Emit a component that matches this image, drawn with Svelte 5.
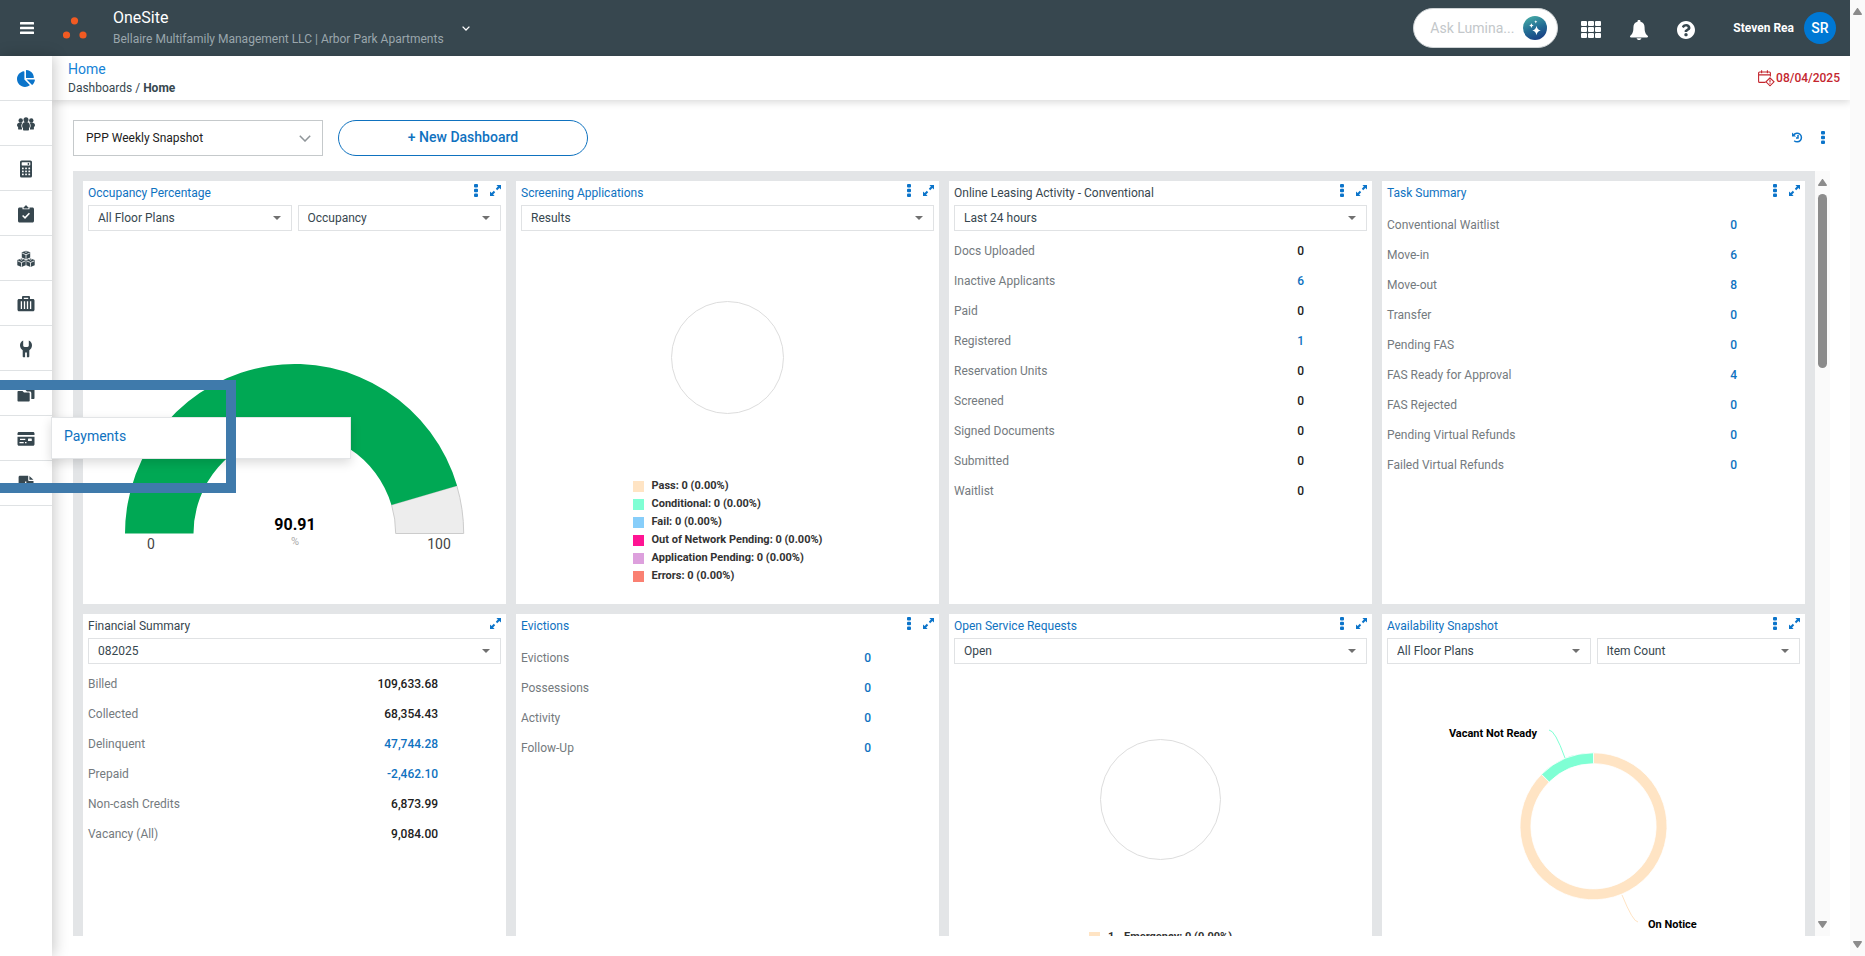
<script>
  const nav = [
    { id: 'dashboards', label: 'Dashboards', active: true },
    { id: 'people', label: 'Residents' },
    { id: 'calculator', label: 'Accounting' },
    { id: 'clipboard', label: 'Tasks' },
    { id: 'cubes', label: 'Units' },
    { id: 'suitcase', label: 'Property' },
    { id: 'wrench', label: 'Facilities' },
    { id: 'folders', label: 'Documents' },
    { id: 'card', label: 'Payments' },
    { id: 'report', label: 'Reports' }
  ];

  const cards = [
    {
      title: 'Occupancy Percentage', link: true, menu: true,
      selects: ['All Floor Plans', 'Occupancy'], chart: 'gauge'
    },
    {
      title: 'Screening Applications', link: true, menu: true,
      selects: ['Results'], chart: 'screening',
      legend: [
        ['#ffe4c4', 'Pass: 0 (0.00%)'],
        ['#7fffd4', 'Conditional: 0 (0.00%)'],
        ['#87cefa', 'Fail: 0 (0.00%)'],
        ['#ff1493', 'Out of Network Pending: 0 (0.00%)'],
        ['#dda0dd', 'Application Pending: 0 (0.00%)'],
        ['#fa8072', 'Errors: 0 (0.00%)']
      ]
    },
    {
      title: 'Online Leasing Activity - Conventional', menu: true,
      selects: ['Last 24 hours'],
      rows: [
        ['Docs Uploaded', '0'], ['Inactive Applicants', '6', true], ['Paid', '0'],
        ['Registered', '1', true], ['Reservation Units', '0'], ['Screened', '0'],
        ['Signed Documents', '0'], ['Submitted', '0'], ['Waitlist', '0']
      ]
    },
    {
      title: 'Task Summary', link: true, menu: true,
      rows: [
        ['Conventional Waitlist', '0', true], ['Move-in', '6', true], ['Move-out', '8', true],
        ['Transfer', '0', true], ['Pending FAS', '0', true], ['FAS Ready for Approval', '4', true],
        ['FAS Rejected', '0', true], ['Pending Virtual Refunds', '0', true],
        ['Failed Virtual Refunds', '0', true]
      ]
    },
    {
      title: 'Financial Summary', selects: ['082025'],
      rows: [
        ['Billed', '109,633.68'], ['Collected', '68,354.43'], ['Delinquent', '47,744.28', true],
        ['Prepaid', '-2,462.10', true], ['Non-cash Credits', '6,873.99'], ['Vacancy (All)', '9,084.00']
      ]
    },
    {
      title: 'Evictions', link: true, menu: true,
      rows: [
        ['Evictions', '0', true], ['Possessions', '0', true],
        ['Activity', '0', true], ['Follow-Up', '0', true]
      ]
    },
    {
      title: 'Open Service Requests', link: true, menu: true,
      selects: ['Open'], chart: 'service',
      legend: [['#ffe4c4', '1 - Emergency: 0 (0.00%)']]
    },
    {
      title: 'Availability Snapshot', link: true, menu: true,
      selects: ['All Floor Plans', 'Item Count'], chart: 'donut'
    }
  ];

  // Point on a circle; the angle is in degrees, clockwise from 12 o'clock.
  const point = (cx, cy, r, deg) => {
    const a = (deg * Math.PI) / 180;
    return `${(cx + r * Math.sin(a)).toFixed(2)} ${(cy - r * Math.cos(a)).toFixed(2)}`;
  };
  const ring = (cx, cy, outer, inner, from, to) => {
    const big = to - from > 180 ? 1 : 0;
    return `M${point(cx, cy, outer, from)}A${outer} ${outer} 0 ${big} 1 ${point(cx, cy, outer, to)}L${point(cx, cy, inner, to)}A${inner} ${inner} 0 ${big} 0 ${point(cx, cy, inner, from)}Z`;
  };
  const gaugeStop = -90 + 1.8 * 90.91;
</script>

{#snippet kebab()}
  <svg width="4" height="13" viewBox="0 0 4 13" fill="currentColor" aria-hidden="true">
    <rect width="4" height="3.4" rx="1" /><rect y="4.8" width="4" height="3.4" rx="1" /><rect y="9.6" width="4" height="3.4" rx="1" />
  </svg>
{/snippet}

{#snippet arrow(down)}
  <svg width="9" height="7" viewBox="0 0 9 7" fill="#8b8b8b" aria-hidden="true">
    {#if down}<path d="M.8 0h7.4c.7 0 1 .8.6 1.3L5.200 6.500c-.4.6-1 .6-1.400 0L.2 1.300C-.2.8.1 0 .8 0z" />
    {:else}<path d="M.8 7h7.400c.7 0 1-.8.6-1.300L5.200.5c-.4-.6-1-.6-1.400 0L.2 5.700C-.2 6.200.1 7 .8 7z" />{/if}
  </svg>
{/snippet}

<div class="window">
  <div class="app">
    <header class="topbar">
      <button class="plain" aria-label="Toggle menu">
        <svg width="14" height="12" viewBox="0 0 14 12" fill="#fff"><rect width="14" height="2.600" rx=".6" /><rect y="4.700" width="14" height="2.600" rx=".6" /><rect y="9.400" width="14" height="2.600" rx=".6" /></svg>
      </button>
      <svg class="logo" width="24" height="22" viewBox="0 0 24 22" fill="#f15a22" aria-hidden="true">
        <circle cx="11.500" cy="3.800" r="3.600" /><circle cx="3.500" cy="18" r="3.600" /><circle cx="20" cy="18" r="3.600" />
      </svg>
      <div class="product">
        <div class="name">OneSite</div>
        <div class="site">Bellaire Multifamily Management LLC | Arbor Park Apartments</div>
      </div>
      <button class="plain" aria-label="Switch property">
        <svg width="8" height="5" viewBox="0 0 8 5" fill="none" stroke="#fff" stroke-width="1.300"><path d="M.6.6 4 4 7.400.6" /></svg>
      </button>
      <div class="tools">
        <div class="ask">
          <input type="text" placeholder="Ask Lumina..." aria-label="Ask Lumina" />
          <svg width="24" height="24" viewBox="0 0 24 24" aria-hidden="true">
            <defs><linearGradient id="lumina" x1=".3" y1="0" x2=".7" y2="1"><stop offset="0" stop-color="#45a9a5" /><stop offset=".5" stop-color="#236e95" /><stop offset="1" stop-color="#193d84" /></linearGradient></defs>
            <circle cx="12" cy="12" r="12" fill="url(#lumina)" />
            <path fill="#fff" d="M13.500 9.800q.6 4 4.300 4.700q-3.700.7-4.300 4.700q-.6-4-4.300-4.700q3.700-.7 4.300-4.700zM8.400 7.200q.3 2 2.200 2.400q-1.900.4-2.200 2.400q-.3-2-2.200-2.400q1.900-.4 2.200-2.400zM12.800 4.200q.2 1.400 1.500 1.600q-1.300.2-1.500 1.600q-.2-1.400-1.500-1.600q1.300-.2 1.500-1.600z" />
          </svg>
        </div>
        <button class="plain" aria-label="Applications">
          <svg width="20" height="17" viewBox="0 0 20 17" fill="#fff">
            {#each [0, 7, 14] as x}{#each [0, 6, 12] as y}<rect {x} {y} width="6" height="5" rx="1" />{/each}{/each}
          </svg>
        </button>
        <button class="plain" aria-label="Notifications">
          <svg width="18" height="20" viewBox="0 0 18 20" fill="#fff"><path d="M9 0c.9 0 1.500.5 1.500 1.400v.4c2.900.7 4.100 3 4.100 5.700 0 5 1.200 6.600 3 8.200.8.8.4 1.900-.7 1.900H1.100c-1.100 0-1.500-1.100-.7-1.900 1.800-1.600 3-3.200 3-8.200 0-2.700 1.200-5 4.100-5.700v-.4C7.500.5 8.100 0 9 0z" /><path d="M6.600 18.200h4.800C11.200 19.400 10.200 20 9 20s-2.200-.6-2.400-1.800z" /></svg>
        </button>
        <button class="plain" aria-label="Help">
          <svg width="18" height="18" viewBox="8 8 496 496" fill="#fff"><path d="M504 256c0 136.997-111.043 248-248 248S8 392.997 8 256C8 119.083 119.043 8 256 8s248 111.083 248 248zM262.655 90c-54.497 0-89.255 22.957-116.549 63.758-3.536 5.286-2.353 12.415 2.715 16.258l34.699 26.310c5.205 3.947 12.621 3.008 16.665-2.122 17.864-22.658 30.113-35.797 57.303-35.797 20.429 0 45.698 13.148 45.698 32.958 0 14.976-12.363 22.667-32.534 33.976C247.128 238.528 216 254.941 216 296v4c0 6.627 5.373 12 12 12h56c6.627 0 12-5.373 12-12v-1.333c0-28.462 83.186-29.647 83.186-106.667 0-58.002-60.165-102-116.531-102zM256 338c-25.365 0-46 20.635-46 46 0 25.364 20.635 46 46 46s46-20.636 46-46c0-25.365-20.635-46-46-46z" /></svg>
        </button>
        <div class="user"><span>Steven Rea</span><span class="avatar">SR</span></div>
      </div>
    </header>

    <div class="body">
      <nav class="sidebar" aria-label="Main">
        {#each nav as item}
          <a href="#{item.id}" class="item" class:active={item.active} aria-label={item.label}>
            <svg width="18" height="18" viewBox="0 0 18 18" fill="currentColor" aria-hidden="true">
              {#if item.id === 'dashboards'}
                <path transform="scale(.033)" d="M527.790 288H290.500l158.030 158.030c6.040 6.040 15.980 6.530 22.190.68 38.700-36.460 65.320-85.610 73.130-140.860 1.340-9.460-6.510-17.850-16.060-17.850zm-15.830-64.800C503.720 103.740 408.260 8.280 288.800.04 279.680-.59 272 7.100 272 16.240V240h223.770c9.140 0 16.820-7.680 16.190-16.800zM224 288V50.710c0-9.550-8.390-17.400-17.840-16.060C86.990 51.490-4.100 155.600.14 280.370 4.500 408.510 114.830 513.590 243.030 511.980c50.400-.63 96.970-16.870 135.260-44.030 7.900-5.600 8.420-17.230 1.570-24.080L224 288z" />
              {:else if item.id === 'people'}
                <circle cx="9" cy="4.700" r="2.500" /><circle cx="3.700" cy="5.500" r="2.200" /><circle cx="14.300" cy="5.500" r="2.200" />
                <path d="M9 7c2.600 0 3.900 1.600 3.900 4 0 .9-.3 1.500-.9 2v1.700c0 .5-.3.800-.8.800H6.800c-.5 0-.8-.3-.8-.8V13c-.6-.5-.9-1.100-.9-2 0-2.400 1.300-4 3.900-4z" />
                <path d="M3.700 7.500c.7 0 1.200.1 1.600.4-.8 1-1.100 2.300-.9 3.600.1.500.3 1 .6 1.400v1.700H1.900c-.5 0-.8-.3-.8-.7v-1.800C.3 11.500 0 10.900 0 10.200c0-1.700 1.400-2.700 3.700-2.700zM14.300 7.500c-.7 0-1.200.1-1.600.4.8 1 1.100 2.300.9 3.600-.1.500-.3 1-.6 1.400v1.700h3.100c.5 0 .8-.3.800-.7v-1.800c.8-.6 1.100-1.200 1.100-1.900 0-1.700-1.400-2.700-3.700-2.700z" />
              {:else if item.id === 'calculator'}
                <rect x="3" y=".5" width="12" height="17" rx="1.600" />
                <rect x="4.700" y="2.300" width="8.600" height="3.200" rx=".4" fill="#fff" />
                <rect x="10.700" y="2.900" width="1.400" height="2" />
                {#each [5, 8.200, 11.400] as x}{#each [7.500, 10.500, 13.500] as y}<rect {x} {y} width="1.700" height="1.700" rx=".5" fill="#fff" />{/each}{/each}
              {:else if item.id === 'clipboard'}
                <path d="M2.600 2.500h2.900v1.800h7V2.500h2.900c.9 0 1.600.6 1.600 1.500v12c0 .9-.7 1.500-1.600 1.500H2.600c-.9 0-1.600-.6-1.600-1.500V4c0-.9.7-1.500 1.600-1.500zM6.600 1.900h.8C7.500 1 8.100.4 9 .4s1.500.6 1.600 1.500h.8v1.500H6.600z" />
                <path d="M5.600 10.500 8 12.800l4.400-4.600" fill="none" stroke="#fff" stroke-width="1.600" />
              {:else if item.id === 'cubes'}
                {#each [[9, 5], [4.500, 12.800], [13.500, 12.800]] as [x, y]}
                  <path transform="translate({x} {y})" d="M0-4.200 4.200-2.700v5.200L0 4.200l-4.200-1.700v-5.200z" />
                  <path transform="translate({x} {y})" d="M-3.800-1.900 0-.3l3.800-1.600M0-.3v4.300M-1.200-3.300 0-2.700l1.200-.6" fill="none" stroke="#fff" stroke-width=".8" />
                {/each}
              {:else if item.id === 'suitcase'}
                <path d="M5 4V2.200C5 1.500 5.500 1 6.200 1h5.600c.7 0 1.200.5 1.200 1.200V4h3c.8 0 1.500.7 1.500 1.500v9.200c0 .8-.7 1.500-1.500 1.500H2c-.8 0-1.500-.7-1.500-1.500V5.500C.5 4.700 1.200 4 2 4zm1.800 0h4.400V2.700H6.800z" />
                <path d="M4.400 6.300v7.800M7.500 6.300v7.800M10.500 6.300v7.800M13.600 6.300v7.800" stroke="#fff" stroke-width="1.300" />
              {:else if item.id === 'wrench'}
                <path d="M6.200.6v5c0 .8.6 1.400 1.400 1.400h2.800c.8 0 1.400-.6 1.400-1.400v-5C13.800 1.500 15 3.300 15 5.300c0 2.200-1.100 4-2.700 5v6c0 .6-.4 1-1 1H9.900v-4.700H8.100v4.700H6.700c-.6 0-1-.4-1-1v-6C4.100 9.300 3 7.500 3 5.300 3 3.300 4.200 1.500 6.200.6z" />
              {:else if item.id === 'folders'}
                <path d="M5 2.500c0-.6.4-1 1-1h4l1.500 1.600h5c.6 0 1 .4 1 1V13c0 .6-.4 1-1 1h-2.200V8c0-.9-.6-1.500-1.500-1.500H10L8.500 5H5z" />
                <path d="M.5 7c0-.6.4-1 1-1h4L7 7.600h4.700c.6 0 1 .4 1 1v6.900c0 .6-.4 1-1 1H1.500c-.6 0-1-.4-1-1z" />
              {:else if item.id === 'card'}
                <path d="M2 2h14c.9 0 1.500.6 1.500 1.500V5H.5V3.500C.5 2.600 1.100 2 2 2zM.5 6.800h17v7.400c0 .9-.6 1.500-1.500 1.500H2c-.9 0-1.500-.6-1.500-1.500z" />
                <path d="M3 9.400h5.300M2.500 12.700h4.200M8 12.700h1.500" stroke="#fff" stroke-width="1.300" /><rect x="11" y="8.500" width="3.800" height="2.600" rx=".4" fill="#fff" />
              {:else}
                <path d="M3 .8h8.200V5c0 .6.400 1 1 1h4.300v10c0 .8-.6 1.400-1.400 1.400H3c-.8 0-1.400-.6-1.400-1.400V2.200C1.600 1.400 2.200.8 3 .8zM12.400.9l4 3.900h-4z" />
                <path d="M5 14V9M8.700 14V6.500M12.400 14v-3.500" stroke="#fff" stroke-width="1.300" />
              {/if}
            </svg>
          </a>
        {/each}
        <div class="flyout"><a href="#payments">Payments</a></div>
        <div class="highlight"></div>
      </nav>

      <main>
        <div class="crumbbar">
          <div>
            <h1>Home</h1>
            <div class="crumbs">Dashboards / <b>Home</b></div>
          </div>
          <div class="date">
            <svg width="17" height="17" viewBox="0 0 17 17" fill="none" stroke="currentColor" stroke-width="1.100" aria-hidden="true">
              <path d="M7.500 12.400H1.600c-.6 0-1-.4-1-1V3c0-.6.4-1 1-1h9.800c.6 0 1 .4 1 1v3.500M.6 4.900h11.800M3.600.2v3M9.400.2v3M12 7.800l4 4-4 4-4-4zM12 9.600v2.800M12 13.200v.9" />
            </svg>
            <span>08/04/2025</span>
          </div>
        </div>

        <div class="toolbar">
          <div class="pick big">
            <select aria-label="Dashboard"><option>PPP Weekly Snapshot</option></select>
            <svg width="12" height="7" viewBox="0 0 12 7" fill="none" stroke="#8f9599" stroke-width="1.500" aria-hidden="true"><path d="M.8.7 6 6 11.200.7" /></svg>
          </div>
          <button class="new">+ New Dashboard</button>
          <div class="actions">
            <button class="plain" aria-label="Restore">
              <svg width="11" height="11" viewBox="0 0 11 11" fill="none" stroke="currentColor" stroke-width="1.500" aria-hidden="true"><path d="M1.800 2.800A4.300 4.300 0 1 1 2.200 8.700M6 3v2.900H4" /><path d="M0 .4v4h4z" fill="currentColor" stroke="none" /></svg>
            </button>
            <button class="plain" aria-label="Dashboard menu">{@render kebab()}</button>
          </div>
        </div>

        <div class="board">
          <div class="grid">
            {#each cards as card}
              <section class="card">
                <div class="head">
                  {#if card.link}<h2><a href="#open">{card.title}</a></h2>{:else}<h2>{card.title}</h2>{/if}
                  <div class="icons">
                    {#if card.menu}<button class="plain" aria-label="{card.title} menu">{@render kebab()}</button>{/if}
                    <button class="plain" aria-label="Expand {card.title}">
                      <svg width="11" height="11" viewBox="0 0 11 11" fill="currentColor" aria-hidden="true"><path d="M6.400 0H11v4.600L9.400 3.100 7.200 5.200 5.800 3.800 7.900 1.600zM4.600 11H0V6.400l1.600 1.500 2.200-2.100 1.400 1.400-2.100 2.200z" /></svg>
                    </button>
                  </div>
                </div>
                {#if card.selects}
                  <div class="filters">
                    {#each card.selects as value}
                      <div class="pick">
                        <select aria-label="{card.title}: {value}"><option>{value}</option></select>
                        <svg width="8" height="4" viewBox="0 0 8 4" fill="#707070" aria-hidden="true"><path d="M0 0h8L4 4z" /></svg>
                      </div>
                    {/each}
                  </div>
                {/if}
                {#if card.rows}
                  <table>
                    <tbody>
                      {#each card.rows as [label, value, link]}
                        <tr><th scope="row">{label}</th><td>{#if link}<a href="#detail">{value}</a>{:else}{value}{/if}</td></tr>
                      {/each}
                    </tbody>
                  </table>
                {:else if card.chart === 'gauge'}
                  <svg class="chart" viewBox="0 0 413 340">
                    <path d={ring(206.5, 302.5, 169.200, 101.200, gaugeStop, 90)} fill="#ededed" stroke="#ccc" stroke-width="1" />
                    <path d={ring(206.5, 302.5, 169.500, 101, -90, gaugeStop)} fill="#00a854" />
                    <g text-anchor="middle">
                      <text x="207" y="299" class="reading">90.91</text>
                      <text x="207" y="314" class="unit">%</text>
                      <text x="63" y="318" class="tick">0</text>
                      <text x="351" y="318" class="tick">100</text>
                    </g>
                  </svg>
                {:else if card.chart === 'screening'}
                  <svg class="chart" viewBox="0 0 413 246"><circle cx="206.500" cy="126.500" r="56" fill="none" stroke="#ddd" /></svg>
                {:else if card.chart === 'service'}
                  <svg class="chart" viewBox="0 0 413 264"><circle cx="206.500" cy="135.500" r="60" fill="none" stroke="#ddd" /></svg>
                {:else}
                  <svg class="chart" viewBox="0 0 413 290">
                    <path d={ring(206.5, 162.3, 73.500, 62.600, 0, 315)} fill="#ffe4c4" stroke="#fff" stroke-width=".8" />
                    <path d={ring(206.5, 162.3, 73.500, 62.600, 315, 360)} fill="#7fffd4" stroke="#fff" stroke-width=".8" />
                    <path d="M178 94Q168 66 162 66" fill="none" stroke="#7fffd4" />
                    <path d="M235 231Q246 258 251 258" fill="none" stroke="#ffe4c4" />
                    <text x="150" y="73" text-anchor="end" class="slice">Vacant Not Ready</text>
                    <text x="261" y="264" class="slice">On Notice</text>
                  </svg>
                {/if}
                {#if card.legend}
                  <ul>
                    {#each card.legend as [color, text]}<li><i style="background: {color}"></i>{text}</li>{/each}
                  </ul>
                {/if}
              </section>
            {/each}
          </div>
          <div class="scroll inner" aria-hidden="true">{@render arrow(false)}<div class="track"><div class="thumb"></div></div>{@render arrow(true)}</div>
        </div>
      </main>
    </div>
  </div>
  <div class="scroll" aria-hidden="true">{@render arrow(false)}<div class="track"></div>{@render arrow(true)}</div>
</div>

<style>
  :global(body) { margin: 0; background: #fff; }
  .window {
    display: flex; height: 100vh; overflow: hidden;
    font-family: Roboto, "Liberation Sans", sans-serif; font-size: 12px; line-height: 18px; color: #37474f;
  }
  .window * { box-sizing: border-box; }
  button, input, select { font: inherit; color: inherit; }
  svg { display: block; flex: none; }
  a { color: #0f72bf; text-decoration: none; }
  .plain { display: grid; place-items: center; padding: 0; border: 0; background: none; cursor: pointer; }

  .app { flex: 1; min-width: 0; display: flex; flex-direction: column; }
  .topbar { display: flex; align-items: center; height: 56px; padding: 0 14px 0 20px; background: #37474f; color: #fff; }
  .logo { margin: 0 26px 0 29px; }
  .product { margin-right: 18px; padding-top: 2px; }
  .name { font-size: 16px; line-height: 20px; }
  .site { line-height: 22px; color: #9aa6ac; }
  .tools { margin-left: auto; display: flex; align-items: center; }
  .ask { display: flex; align-items: center; width: 145px; height: 40px; padding: 0 10px 0 16px; margin-right: 23px; border: 1px solid #cfd4d6; border-radius: 20px; background: #fff; }
  .ask input { flex: 1; min-width: 0; padding: 0; border: 0; outline: 0; background: none; font-size: 14px; }
  .ask input::placeholder { color: #c3c7ca; opacity: 1; }
  .tools .plain { margin-right: 29px; padding-top: 3px; }
  .user { display: flex; align-items: center; gap: 10px; margin-left: 9px; font-weight: 700; }
  .avatar { display: grid; place-items: center; width: 32px; height: 32px; border-radius: 50%; background: #0078d4; font-size: 14px; font-weight: 500; }

  .body { flex: 1; min-height: 0; display: flex; }
  .sidebar { position: relative; z-index: 2; width: 52px; flex: none; background: #fff; box-shadow: 2px 0 14px rgba(0, 0, 0, .22); }
  .item { display: grid; place-items: center; height: 45px; padding-top: 1px; border-bottom: 1px solid #dfe2e4; color: #37474f; }
  .item.active { color: #0b74ca; }
  .flyout { position: absolute; left: 51px; top: 361px; width: 300px; height: 42px; padding: 8px 12px; border: 1px solid #e3e5e7; background: #fff; box-shadow: 0 4px 10px rgba(0, 0, 0, .14); font-size: 14px; line-height: 20px; }
  .highlight { position: absolute; left: 0; top: 324px; width: 236px; height: 113px; border: 10px solid #3f7aab; border-left: 0; pointer-events: none; }

  main { flex: 1; min-width: 0; display: flex; flex-direction: column; padding-bottom: 20px; background: #fff; }
  .crumbbar { display: flex; justify-content: space-between; align-items: center; height: 44px; padding: 0 10px 0 16px; box-shadow: 0 2px 8px rgba(0, 0, 0, .16); }
  h1 { margin: 0; font-size: 14px; line-height: 20px; font-weight: 400; color: #1583d6; }
  .date { display: flex; align-items: center; gap: 1px; font-weight: 500; color: #c4262e; }
  .toolbar { display: flex; align-items: center; gap: 15px; padding: 20px 25px 15px 21px; }
  .pick { position: relative; flex: 1; min-width: 0; }
  .pick select { display: block; width: 100%; height: 26px; padding: 0 24px 0 9px; border: 1px solid #e0e2e4; border-radius: 0; background: #fff; appearance: none; }
  .pick svg { position: absolute; right: 11px; top: 11px; pointer-events: none; }
  .pick.big { flex: 0 0 250px; }
  .big select { height: 36px; padding-left: 12px; border-color: #c5c9cb; color: #212121; }
  .big svg { right: 12px; top: 15px; }
  .new { width: 250px; height: 36px; padding: 0 0 2px; border: 1px solid #0f72bf; border-radius: 18px; background: #fff; color: #0f72bf; font-size: 14px; font-weight: 500; }
  .actions { display: flex; gap: 18px; margin-left: auto; padding-bottom: 2px; color: #0b74ca; }

  .board { flex: 1; min-height: 0; display: flex; padding: 0 20px 0 21px; overflow: hidden; }
  .grid { flex: 1; min-width: 0; min-height: 100%; display: grid; grid-template-columns: repeat(4, minmax(0, 1fr)); grid-auto-rows: max-content; align-self: flex-start; align-content: start; gap: 10px; padding: 10px; background: #e3e5e7; }
  .card { aspect-ratio: 1; padding: 0 5px; background: #fff; overflow: hidden; }
  .head { display: flex; justify-content: space-between; height: 24px; }
  h2 { margin: 0; font-size: 12px; line-height: 24px; font-weight: 400; }
  .icons { display: flex; align-items: center; gap: 12px; height: 19px; color: #0b74ca; }
  .filters { display: flex; gap: 6px; }

  table { width: 85%; margin-top: 5px; border-collapse: collapse; }
  th, td { height: 30px; padding: 0; }
  th { text-align: left; font-weight: 400; color: #747a7e; }
  td { padding-right: 1px; text-align: right; font-weight: 500; color: #212121; }

  .chart { width: 100%; height: auto; }
  .reading { font-size: 16px; font-weight: 700; fill: #000; }
  .unit { font-size: 11px; fill: #aaa; }
  .tick { font-size: 14px; fill: #444; }
  .slice { font-size: 11px; font-weight: 700; fill: #000; }
  ul { width: fit-content; margin: 0 auto; padding: 0; list-style: none; font-size: 11px; font-weight: 700; color: #333; }
  li { display: flex; align-items: center; gap: 8px; height: 18px; }
  i { width: 11px; height: 11px; }

  .scroll { display: flex; flex-direction: column; align-items: center; width: 15px; flex: none; padding: 8px 0; background: #fafafa; }
  .track { flex: 1; width: 9px; padding-top: 8px; }
  .thumb { height: 24%; border-radius: 5px; background: #8b8b8b; }
</style>
